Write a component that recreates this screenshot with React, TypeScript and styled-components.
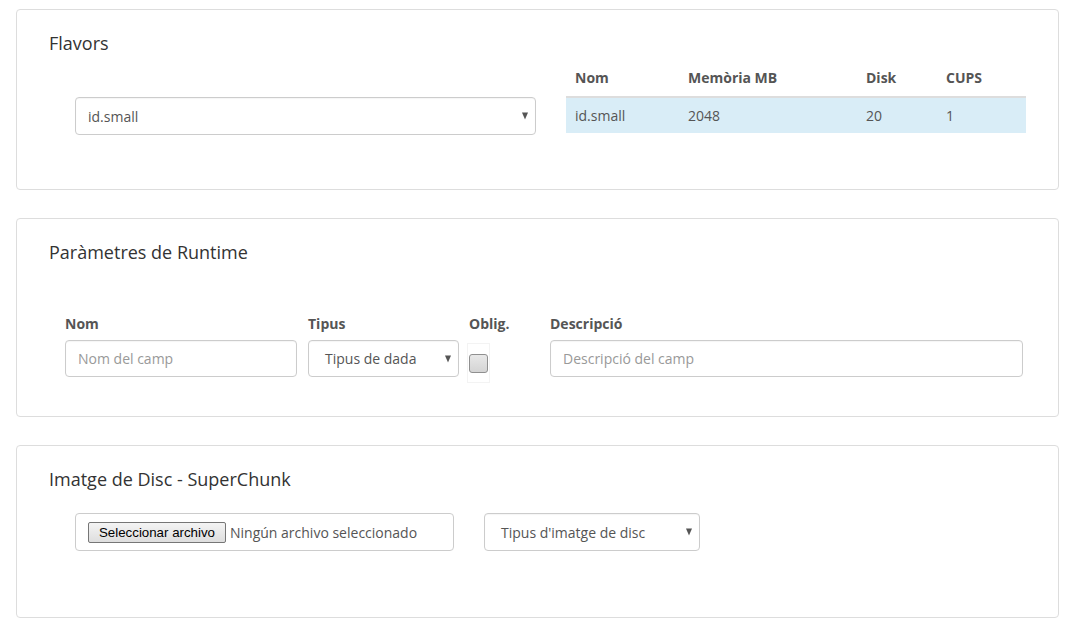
import React from "react";
import styled, { createGlobalStyle } from "styled-components";

const Global = createGlobalStyle`
  html, body { margin: 0; padding: 0; background: #fff; }
  body { font-family: "Open Sans", "Noto Sans", sans-serif; font-size: 14px; color: #555; }
  * { box-sizing: border-box; }
`;

const Page = styled.div`
  padding: 9px 22px 16px 16px;
  display: flex;
  flex-direction: column;
  gap: 28px;
`;

const Panel = styled.section<{ $pb: number }>`
  border: 1px solid #ddd;
  border-radius: 4px;
  padding: 23px 32px ${(p) => p.$pb}px;
`;

const Title = styled.h3`
  margin: 0;
  font-size: 18px;
  font-weight: 400;
  line-height: 20px;
  color: #333;
`;

const FlavorRow = styled.div`
  display: flex;
  margin-top: 7px;
  padding-left: 26px;
  gap: 30px;
  align-items: flex-start;
`;

const SelectBox = styled.div<{ $w: number; $h?: number }>`
  position: relative;
  width: ${(p) => p.$w}px;
  height: ${(p) => p.$h ?? 38}px;
  border: 1px solid #ccc;
  border-radius: 4px;
  background: #fff;
  display: flex;
  align-items: center;
  padding: 0 12px;
  color: #555;
  font-size: 14px;
  box-shadow: inset 0 1px 1px rgba(0, 0, 0, 0.04);
`;

const Arrow = styled.span`
  position: absolute;
  right: 7px;
  top: 50%;
  transform: translateY(-50%);
  width: 0;
  height: 0;
  border-left: 3.5px solid transparent;
  border-right: 3.5px solid transparent;
  border-top: 7px solid #555;
`;

const FlavorSelect = styled(SelectBox)`
  margin-top: 37px;
  padding-left: 12px;
`;

const Table = styled.table`
  width: 460px;
  border-collapse: collapse;
  font-size: 14px;
  color: #555;
`;

const Th = styled.th<{ $w: number }>`
  width: ${(p) => p.$w}px;
  text-align: left;
  font-weight: 700;
  padding: 8px 9px;
  line-height: 20px;
  border-bottom: 2px solid #ddd;
`;

const Td = styled.td`
  padding: 8px 9px;
  line-height: 19px;
  background: #d9edf7;
`;

const FieldGrid = styled.div`
  display: grid;
  grid-template-columns: 243px 161px 81px 472px;
  row-gap: 6px;
  margin-top: 52px;
  padding-left: 16px;
  align-items: start;
`;

const Label = styled.label`
  font-weight: 700;
  line-height: 20px;
  color: #555;
`;

const Input = styled.div<{ $w: number }>`
  width: ${(p) => p.$w}px;
  height: 37px;
  border: 1px solid #ccc;
  border-radius: 4px;
  padding: 0 12px;
  display: flex;
  align-items: center;
  color: #999;
  box-shadow: inset 0 1px 1px rgba(0, 0, 0, 0.04);
`;

const TypeSelect = styled(SelectBox)`
  padding-left: 16px;
`;

const CheckWrap = styled.div`
  width: 23px;
  height: 40px;
  margin-top: 3px;
  margin-bottom: -6px;
  margin-left: -2px;
  border: 1px solid #f3f3f3;
  display: flex;
  align-items: center;
  justify-content: center;
`;

const Check = styled.span`
  width: 19px;
  height: 19px;
  border: 1px solid #8f8f8f;
  border-radius: 3px;
  background: linear-gradient(#e8e8e8, #d4d4d4);
`;

const DiskRow = styled.div`
  display: flex;
  gap: 30px;
  margin-top: 24px;
  padding-left: 26px;
`;

const FileBox = styled.div`
  width: 379px;
  height: 38px;
  border: 1px solid #ccc;
  border-radius: 4px;
  display: flex;
  align-items: center;
  padding-left: 12px;
  gap: 4px;
  color: #555;
`;

const FileButton = styled.span`
  height: 21px;
  width: 138px;
  border: 1px solid #767676;
  border-radius: 2px;
  background: linear-gradient(#f4f4f4, #dedede);
  font-family: "Liberation Sans", Arial, sans-serif;
  font-size: 13.3px;
  color: #000;
  display: flex;
  align-items: center;
  justify-content: center;
`;

const DiskSelect = styled(SelectBox)`
  padding-left: 16px;
`;

export default function App() {
  return (
    <>
      <Global />
      <Page>
        <Panel $pb={54}>
          <Title>Flavors</Title>
          <FlavorRow>
            <FlavorSelect $w={461}>
              id.small
              <Arrow />
            </FlavorSelect>
            <Table>
              <thead>
                <tr>
                  <Th $w={113}>Nom</Th>
                  <Th $w={178}>Memòria MB</Th>
                  <Th $w={80}>Disk</Th>
                  <Th $w={89}>CUPS</Th>
                </tr>
              </thead>
              <tbody>
                <tr>
                  <Td>id.small</Td>
                  <Td>2048</Td>
                  <Td>20</Td>
                  <Td>1</Td>
                </tr>
              </tbody>
            </Table>
          </FlavorRow>
        </Panel>

        <Panel $pb={39}>
          <Title>Paràmetres de Runtime</Title>
          <FieldGrid>
            <Label>Nom</Label>
            <Label>Tipus</Label>
            <Label>Oblig.</Label>
            <Label>Descripció</Label>
            <Input $w={232}>Nom del camp</Input>
            <TypeSelect $w={151} $h={37}>
              Tipus de dada
              <Arrow />
            </TypeSelect>
            <CheckWrap>
              <Check />
            </CheckWrap>
            <Input $w={473}>Descripció del camp</Input>
          </FieldGrid>
        </Panel>

        <Panel $pb={66}>
          <Title>Imatge de Disc - SuperChunk</Title>
          <DiskRow>
            <FileBox>
              <FileButton>Seleccionar archivo</FileButton>
              Ningún archivo seleccionado
            </FileBox>
            <DiskSelect $w={216}>
              Tipus d'imatge de disc
              <Arrow />
            </DiskSelect>
          </DiskRow>
        </Panel>
      </Page>
    </>
  );
}
